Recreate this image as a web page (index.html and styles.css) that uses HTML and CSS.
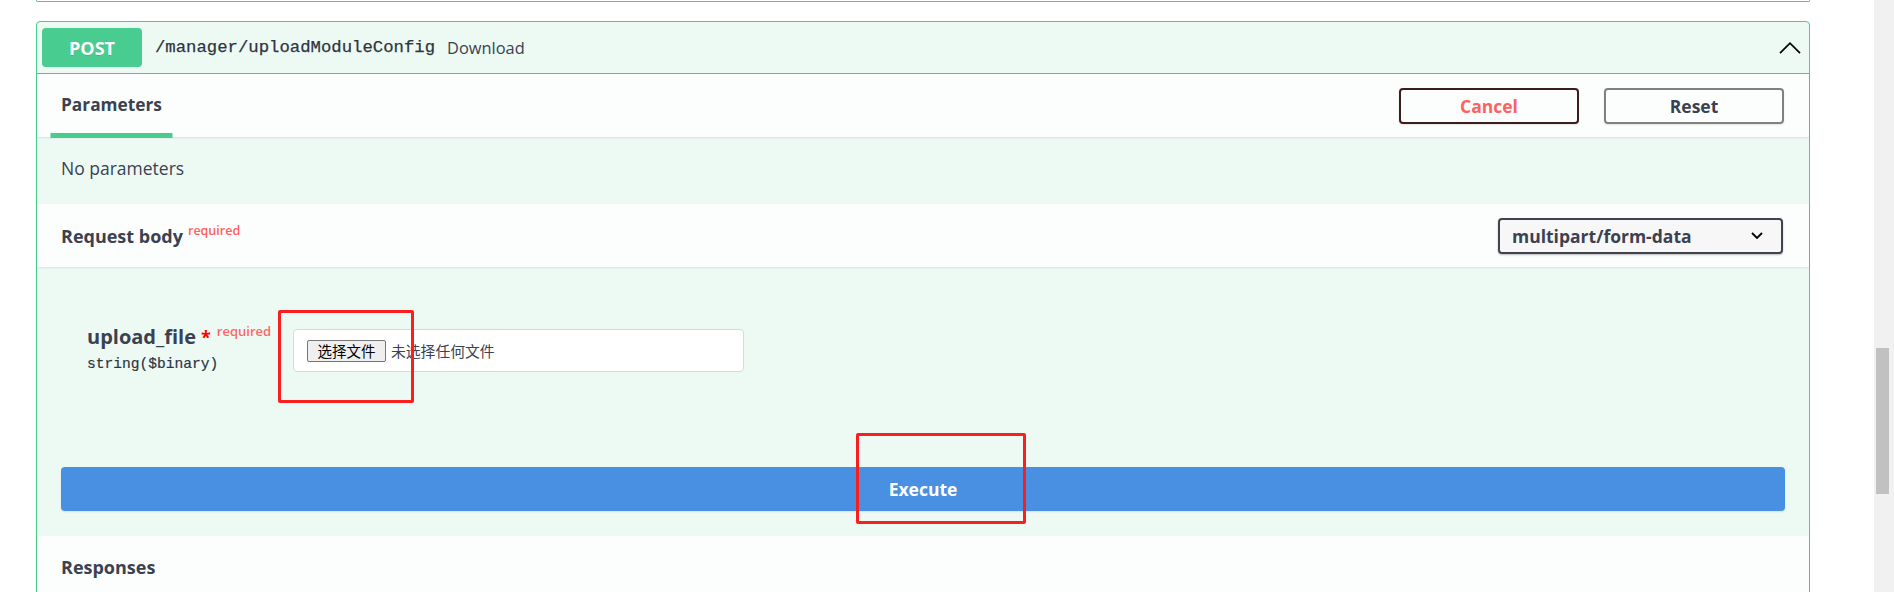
FILE: index.html
```html
<!DOCTYPE html>
<html lang="zh-CN">
<head>
<meta charset="utf-8">
<title>Swagger - uploadModuleConfig</title>
<link rel="stylesheet" href="styles.css">
</head>
<body>
<div class="page">
  <main class="main">
    <div class="prev-card"></div>
    <section class="opblock">
      <div class="summary">
        <span class="method">POST</span>
        <span class="path">/manager/uploadModuleConfig</span>
        <span class="desc">Download</span>
        <svg class="chev" width="22" height="12" viewBox="0 0 22 12"><polyline points="1,11.2 11,1.2 21,11.2" fill="none" stroke="#000" stroke-width="1.7"/></svg>
      </div>
      <div class="section-header">
        <h4 class="tab">Parameters</h4>
        <div class="btn-group">
          <button class="btn cancel">Cancel</button>
          <button class="btn reset">Reset</button>
        </div>
      </div>
      <div class="no-params">No parameters</div>
      <div class="section-header">
        <h4 class="title title-body">Request body<span class="req">required</span></h4>
        <div class="select">
          <span>multipart/form-data</span>
          <svg width="12" height="7" viewBox="0 0 12 7"><polyline points="1,1 6,6 11,1" fill="none" stroke="#000" stroke-width="1.8"/></svg>
        </div>
      </div>
      <div class="body">
        <div class="param-row">
          <div class="param-name">
            <div class="name">upload_file<span class="star">*</span><span class="req2">required</span></div>
            <div class="type">string($binary)</div>
          </div>
          <div class="file-input">
            <span class="file-btn">选择文件</span>
            <span class="file-text">未选择任何文件</span>
          </div>
        </div>
        <button class="execute">Execute</button>
      </div>
      <div class="section-header">
        <h4 class="title title-resp">Responses</h4>
      </div>
    </section>
  </main>
  <div class="scrollbar"><div class="thumb"></div></div>
</div>
<div class="mark mark-file"></div>
<div class="mark mark-exec"></div>
</body>
</html>
```
FILE: styles.css
```css
* { box-sizing: border-box; }
html, body { margin: 0; padding: 0; }
body {
  width: 1894px;
  height: 592px;
  overflow: hidden;
  background: #fff;
  font-family: "Open Sans", "Noto Sans", "Noto Sans CJK SC", sans-serif;
  color: #3b4151;
  position: relative;
}
.page { display: flex; height: 592px; }
.main { width: 1874px; padding: 0 64px 0 36px; }
.scrollbar { width: 20px; background: #f1f1f1; padding: 348px 0 0 2px; }
.thumb { width: 13px; height: 146px; background: #c1c1c1; }

.prev-card {
  height: 2px;
  border: 1px solid #49cc90;
  border-top: none;
  border-radius: 0 0 4px 4px;
  margin-bottom: 19px;
}
.opblock {
  border: 1px solid #49cc90;
  border-radius: 4px;
  background: #edfaf4;
  height: 700px;
}
.summary {
  display: flex;
  align-items: center;
  padding: 6px 8px 6px 5px;
  border-bottom: 1px solid #49cc90;
}
.method {
  width: 100px;
  height: 39px;
  display: flex;
  align-items: center;
  justify-content: center;
  background: #49cc90;
  border-radius: 4px;
  color: #fff;
  font-weight: 700;
  font-size: 18px;
  text-shadow: 0 1px 0 rgba(0,0,0,.1);
}
.path {
  margin-left: 13px;
  font-family: "Liberation Mono", monospace;
  font-size: 17.3px;
  color: #2f3441;
  -webkit-text-stroke: 0.25px #2f3441;
}
.desc { margin-left: 12px; font-size: 16.4px; }
.chev { margin-left: auto; }

.section-header {
  height: 63px;
  display: flex;
  align-items: center;
  padding: 0 24px;
  background: rgba(255,255,255,.8);
  box-shadow: 0 1px 2px rgba(0,0,0,.1);
}
h4 { margin: 0; font-size: 18px; font-weight: 700; line-height: 24px; }
.tab { position: relative; font-size: 17.3px; margin-top: -2px; }
.tab::after {
  content: "";
  position: absolute;
  left: 50%;
  transform: translateX(-50%);
  width: 120%;
  height: 5px;
  bottom: -21px;
  background: #49cc90;
}
.btn-group { margin-left: auto; display: flex; gap: 25px; margin-right: 1px; }
.btn {
  width: 180px;
  height: 36px;
  border: 2px solid #808080;
  border-radius: 4px;
  background: transparent;
  font-family: inherit;
  font-size: 17.5px;
  font-weight: 700;
  box-shadow: 0 1px 2px rgba(0,0,0,.1);
  padding: 0;
}
.cancel { color: #ff6060; border-color: #3d1c1c; }
.reset { color: #3b4151; }

.no-params { padding: 22px 24px 26px; font-size: 17.5px; line-height: 19px; }

.title-body { margin-top: 4px; }
.title-resp { margin-top: -2px; }
.title .req {
  color: #ff6060;
  font-size: 12.5px;
  font-weight: 600;
  position: relative;
  top: -8px;
  margin-left: 5px;
}
.select {
  margin-left: auto;
  margin-right: 2px;
  width: 285px;
  height: 36px;
  display: flex;
  align-items: center;
  justify-content: space-between;
  padding: 0 18px 0 12px;
  background: #f7f7f7;
  border: 2px solid #41444e;
  border-radius: 4px;
  box-shadow: 0 1px 2px rgba(0,0,0,.25);
  font-size: 17.5px;
  font-weight: 700;
}

.body { padding: 62px 24px 25px; }
.param-row { display: flex; align-items: flex-start; }
.param-name { width: 232px; padding-left: 26px; margin-top: -4px; }
.name { font-size: 20px; font-weight: 700; line-height: 24px; white-space: nowrap; }
.star { color: #f00; font-size: 18px; margin-left: 5px; }
.req2 {
  color: #ff6666;
  font-size: 13px;
  font-weight: 600;
  position: relative;
  top: -8px;
  margin-left: 6px;
}
.type {
  font-family: "Liberation Mono", monospace;
  font-size: 14.6px;
  line-height: 18px;
  margin-top: 4px;
  color: #2f3441;
  -webkit-text-stroke: 0.2px #2f3441;
}
.file-input {
  width: 451px;
  height: 43px;
  background: #fff;
  border: 1px solid #d9d9d9;
  border-radius: 4px;
  display: flex;
  align-items: center;
  padding-left: 13px;
  font-family: "Noto Sans CJK SC", sans-serif;
}
.file-btn {
  width: 79px;
  height: 22px;
  display: flex;
  align-items: center;
  justify-content: center;
  background: #efefef;
  border: 1px solid #767676;
  border-radius: 2px;
  font-size: 14.5px;
  line-height: 20px;
  color: #000;
}
.file-text { margin-left: 5px; font-size: 14.8px; line-height: 20px; color: #3b4151; }

.execute {
  display: block;
  width: 100%;
  height: 44px;
  margin-top: 94px;
  border: none;
  border-radius: 4px;
  background: #4990e2;
  color: #fff;
  font-family: inherit;
  font-size: 17.5px;
  font-weight: 700;
  box-shadow: 0 1px 2px rgba(0,0,0,.1);
}

.mark {
  position: absolute;
  border: 3px solid #fa1e1e;
  border-radius: 2px;
}
.mark-file { left: 278px; top: 310px; width: 136px; height: 93px; }
.mark-exec { left: 856px; top: 433px; width: 170px; height: 91px; }
```
